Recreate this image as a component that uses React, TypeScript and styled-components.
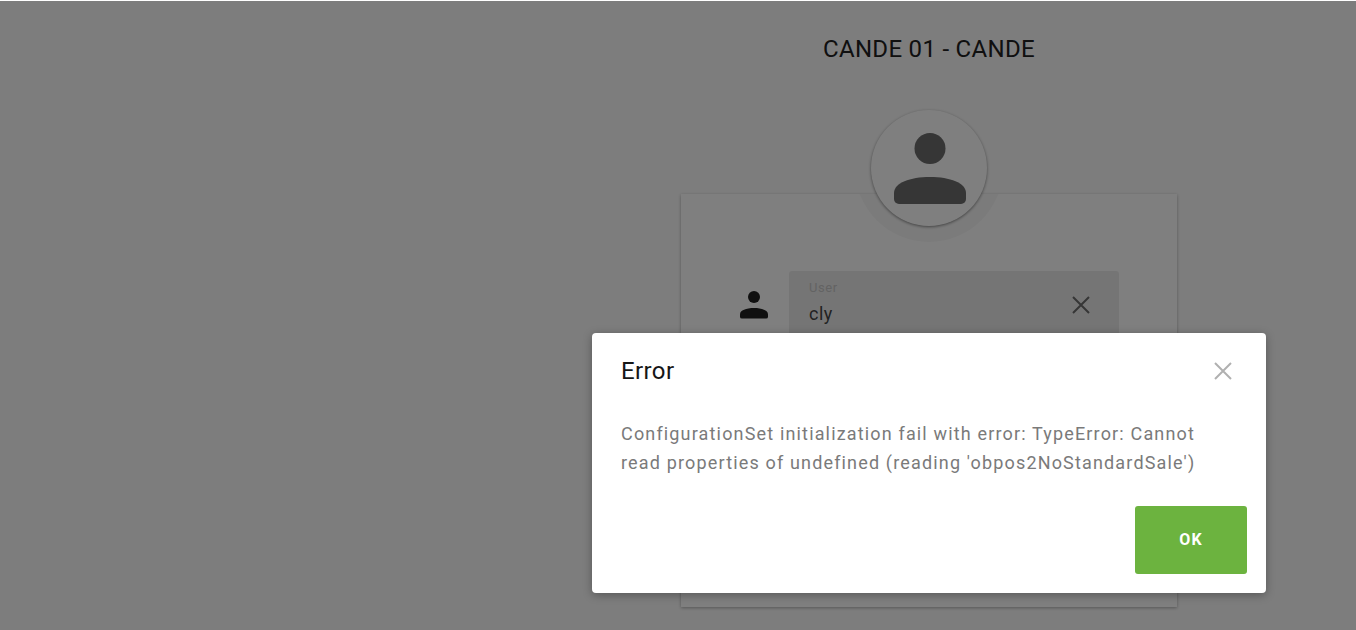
import React from "react";
import styled, { createGlobalStyle } from "styled-components";

const Global = createGlobalStyle`
  html, body { margin: 0; padding: 0; height: 100%; overflow: hidden; }
  body { font-family: Roboto, "Liberation Sans", sans-serif; background: #fafafa; }
`;

const Page = styled.div`
  position: relative;
  height: 630px;
  display: grid;
  grid-template-columns: 1fr 496px 179px;
  border-top: 1px solid #fff;
  box-sizing: border-box;
`;

const LoginColumn = styled.main`
  grid-column: 2;
  display: flex;
  flex-direction: column;
  align-items: center;
`;

const Title = styled.h1`
  margin: 34px 0 0;
  font-size: 24px;
  line-height: 28px;
  font-weight: 400;
  letter-spacing: 0.3px;
  color: #202020;
`;

const AvatarWrap = styled.div`
  position: relative;
  z-index: 1;
  margin-top: 47px;
  width: 116px;
  height: 116px;
  margin-bottom: -32px;
`;

const AvatarRing = styled.div`
  position: absolute;
  left: -16px;
  top: -16px;
  width: 148px;
  height: 148px;
  border-radius: 50%;
  background: #f7f7f7;
  clip-path: inset(100px 0 0 0);
`;

const Avatar = styled.div`
  position: absolute;
  inset: 0;
  border-radius: 50%;
  background: #fff;
  box-shadow: 0 1px 3px rgba(0, 0, 0, 0.45);
  display: flex;
  align-items: center;
  justify-content: center;
`;

const AvatarIcon = styled.div`
  display: flex;
  margin: 2px 0 0 2px;
`;

const Card = styled.section`
  width: 496px;
  height: 413px;
  box-sizing: border-box;
  background: #fff;
  box-shadow: 0 1px 3px rgba(0, 0, 0, 0.3);
  padding: 77px 58px 0 58px;
`;

const FieldRow = styled.div`
  display: flex;
  align-items: flex-start;
  gap: 18px;
`;

const FieldIcon = styled.div`
  width: 32px;
  height: 32px;
  margin: 20px 0 0;
  padding-left: 1px;
  box-sizing: border-box;
  flex: none;
`;

const Field = styled.div`
  position: relative;
  flex: 1;
  height: 72px;
  box-sizing: border-box;
  padding: 9px 20px 0;
  background: #ebebeb;
  border-radius: 3px 3px 0 0;
`;

const FieldLabel = styled.div`
  font-size: 13px;
  line-height: 15px;
  letter-spacing: 0.6px;
  color: #c6c6c6;
`;

const FieldValue = styled.div`
  margin-top: 7px;
  font-size: 18px;
  line-height: 24px;
  letter-spacing: 0.5px;
  color: #444;
`;

const ClearButton = styled.div`
  position: absolute;
  right: 26px;
  top: 22px;
  width: 24px;
  height: 24px;
`;

const Overlay = styled.div`
  position: absolute;
  inset: 0;
  z-index: 2;
  background: rgba(0, 0, 0, 0.5);
`;

const Dialog = styled.div`
  position: absolute;
  z-index: 3;
  left: 592px;
  top: 332px;
  width: 674px;
  height: 260px;
  box-sizing: border-box;
  background: #fff;
  border-radius: 4px;
  box-shadow: 0 2px 10px rgba(0, 0, 0, 0.3);
  padding: 0 19px 19px 29px;
  display: flex;
  flex-direction: column;
`;

const DialogHeader = styled.header`
  display: flex;
  justify-content: space-between;
  align-items: center;
  height: 76px;
  padding-right: 12px;
`;

const DialogTitle = styled.h2`
  margin: 0;
  font-size: 24px;
  font-weight: 400;
  letter-spacing: 0.4px;
  color: #161616;
`;

const DialogBody = styled.p`
  margin: 10px 0 0;
  width: 600px;
  font-size: 18px;
  line-height: 29px;
  letter-spacing: 1.16px;
  font-weight: 400;
  color: #7a7a7a;
`;

const DialogFooter = styled.footer`
  margin-top: auto;
  display: flex;
  justify-content: flex-end;
`;

const OkButton = styled.button`
  width: 112px;
  height: 68px;
  padding-bottom: 2px;
  border: 0;
  border-radius: 3px;
  background: #6cb33f;
  color: #fff;
  font-family: inherit;
  font-size: 16px;
  font-weight: 700;
  letter-spacing: 1.2px;
`;

const Person = ({ size, color }: { size: number; color: string }) => (
  <svg width={size} height={size} viewBox="0 0 72 72" fill={color}>
    <circle cx="36" cy="15.5" r="15.5" />
    <path d="M0 60C0 50 16 44 36 44S72 50 72 60v6a5 5 0 0 1-5 5H5a5 5 0 0 1-5-5z" />
  </svg>
);

const CloseX = ({ size, color, width }: { size: number; color: string; width: number }) => (
  <svg width={size} height={size} viewBox="0 0 24 24" fill="none" stroke={color} strokeWidth={width}>
    <path d="M4 4l16 16M20 4L4 20" />
  </svg>
);

export default function App() {
  return (
    <>
      <Global />
      <Page>
        <LoginColumn>
          <Title>CANDE 01 - CANDE</Title>
          <AvatarWrap>
            <AvatarRing />
            <Avatar>
              <AvatarIcon>
                <Person size={72} color="#6c6c6c" />
              </AvatarIcon>
            </Avatar>
          </AvatarWrap>
          <Card>
            <FieldRow>
              <FieldIcon>
                <Person size={28} color="#202020" />
              </FieldIcon>
              <Field>
                <FieldLabel>User</FieldLabel>
                <FieldValue>cly</FieldValue>
                <ClearButton>
                  <CloseX size={24} color="#6c6c6c" width={2} />
                </ClearButton>
              </Field>
            </FieldRow>
          </Card>
        </LoginColumn>
        <Overlay />
        <Dialog>
          <DialogHeader>
            <DialogTitle>Error</DialogTitle>
            <CloseX size={24} color="#b0b0b0" width={2} />
          </DialogHeader>
          <DialogBody>
            ConfigurationSet initialization fail with error: TypeError: Cannot read properties of undefined (reading 'obpos2NoStandardSale')
          </DialogBody>
          <DialogFooter>
            <OkButton>OK</OkButton>
          </DialogFooter>
        </Dialog>
      </Page>
    </>
  );
}
